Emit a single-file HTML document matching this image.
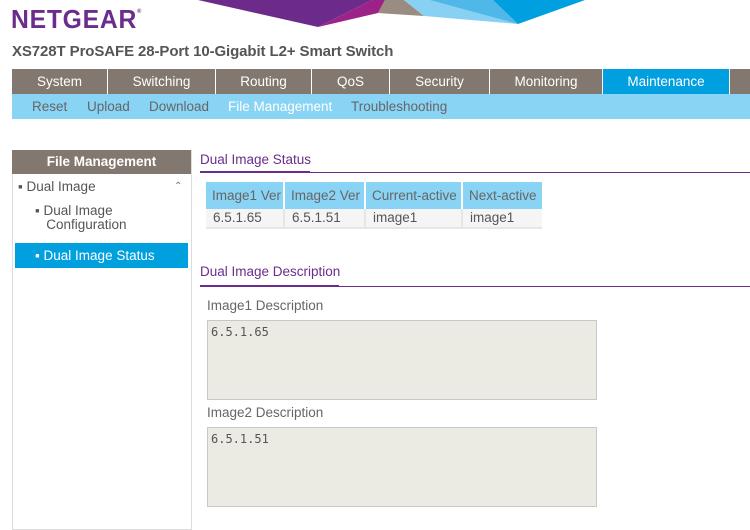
<!DOCTYPE html>
<html><head><style>
*{margin:0;padding:0;box-sizing:border-box}
body{width:750px;height:525px;overflow:hidden;background:#fff;font-family:"Liberation Sans",Arial,sans-serif;position:relative;color:#555}
.a{position:absolute;white-space:nowrap}
.logo{left:11px;top:4px;font-size:26px;font-weight:bold;color:#6b2c8c;letter-spacing:0.8px;transform:scaleX(0.95);transform-origin:left}
.logo sup{font-size:6px;vertical-align:top;position:relative;top:5px}
.title{left:12px;top:43px;font-size:15px;font-weight:bold;color:#555;letter-spacing:-0.1px}
.nav{left:12px;top:69px;width:738px;height:25px;background:#827870}
.tab{position:absolute;top:0;height:25px;line-height:25px;color:#fff;font-size:13.5px;text-align:center;border-right:1px solid #fff}
.sub{left:12px;top:94px;width:738px;height:25px;background:#89d3f4;font-size:13.5px;color:#666}
.sub span{position:absolute;top:5px}
.lp{left:12px;top:150px;width:180px;height:380px;border:1px solid #ddd;border-top:none}
.lh{left:12px;top:150px;width:179px;height:24px;background:#827870;color:#fff;font-weight:bold;font-size:13.5px;text-align:center;line-height:24px}
.li{font-size:13.5px;color:#555}
.sec{font-size:13.5px;color:#6b2c8c}
.th{position:absolute;top:0;height:27px;line-height:27px;background:#89d3f4;color:#666;font-size:13.5px;padding-left:6px;border-right:2px solid #fff;white-space:nowrap;overflow:hidden}
.td{position:absolute;top:27px;height:20px;line-height:18px;background:#f5f5f5;color:#555;font-size:13.5px;padding-left:7px;border-right:2px solid #e6e6e6;border-bottom:2px solid #e6e6e6}
.ta{left:207px;width:390px;height:80px;background:#ebeae3;border:1px solid #c8c8c8;font-family:"DejaVu Sans Mono",monospace;font-size:12px;color:#555;padding:4px 3px;white-space:pre}
</style></head><body>
<svg class="a" style="left:0;top:0" width="750" height="30">
<polygon points="198,0 318,27 372,0" fill="#6c2a8a"/>
<polygon points="318,27 378,13 385,0 372,0" fill="#9c2288"/>
<polygon points="378,13 424,16 404,0 385,0" fill="#9a8c80"/>
<polygon points="404,0 424,16 518,24 470,0" fill="#88d1f4"/>
<polygon points="430,0 518,24 493,0" fill="#4fb8e8"/>
<polygon points="493,0 518,24 585,0" fill="#009fdf"/>
</svg>
<div class="a logo">NETGEAR<sup>®</sup></div>
<div class="a title">XS728T ProSAFE 28-Port 10-Gigabit L2+ Smart Switch</div>
<div class="a nav">
<div class="tab" style="left:0;width:96px">System</div>
<div class="tab" style="left:96px;width:108px">Switching</div>
<div class="tab" style="left:204px;width:96px">Routing</div>
<div class="tab" style="left:300px;width:78px">QoS</div>
<div class="tab" style="left:378px;width:100px">Security</div>
<div class="tab" style="left:478px;width:113px">Monitoring</div>
<div class="tab" style="left:591px;width:127px;background:#009fdf">Maintenance</div>
</div>
<div class="a sub">
<span style="left:20px">Reset</span><span style="left:75px">Upload</span><span style="left:137px">Download</span><span style="left:216px;color:#fff">File Management</span><span style="left:339px">Troubleshooting</span>
</div>
<div class="a lp"></div>
<div class="a lh">File Management</div>
<div class="a li" style="left:18px;top:179px">▪ Dual Image</div>
<div class="a" style="left:174px;top:181px;font-size:10px;color:#777">&#8963;</div>
<div class="a li" style="left:35px;top:204px;line-height:14px">▪ Dual Image<br>&nbsp;&nbsp;&nbsp;Configuration</div>
<div class="a" style="left:15px;top:243px;width:173px;height:25px;background:#00a0df;color:#fff;font-size:13.5px;line-height:25px;padding-left:20px">▪ Dual Image Status</div>
<div class="a sec" style="left:200px;top:152px">Dual Image Status</div>
<div class="a" style="left:200px;top:172px;width:550px;height:1px;background:#6b2c8c"></div>
<div class="a" style="left:200px;top:171px;width:110px;height:2px;background:#6b2c8c"></div>
<div class="a" style="left:206px;top:182px;width:336px;height:49px">
<div class="th" style="left:0;width:79px">Image1 Ver</div>
<div class="th" style="left:79px;width:81px">Image2 Ver</div>
<div class="th" style="left:160px;width:97px">Current-active</div>
<div class="th" style="left:257px;width:79px;border-right:none">Next-active</div>
<div class="td" style="left:0;width:79px">6.5.1.65</div>
<div class="td" style="left:79px;width:81px">6.5.1.51</div>
<div class="td" style="left:160px;width:97px">image1</div>
<div class="td" style="left:257px;width:79px;border-right:none">image1</div>
</div>
<div class="a sec" style="left:200px;top:264px">Dual Image Description</div>
<div class="a" style="left:200px;top:286px;width:550px;height:1px;background:#6b2c8c"></div>
<div class="a" style="left:200px;top:285px;width:139px;height:2px;background:#6b2c8c"></div>
<div class="a li" style="left:207px;top:298px;color:#666">Image1 Description</div>
<div class="a ta" style="top:320px">6.5.1.65</div>
<div class="a li" style="left:207px;top:405px;color:#666">Image2 Description</div>
<div class="a ta" style="top:427px">6.5.1.51</div>
</body></html>
